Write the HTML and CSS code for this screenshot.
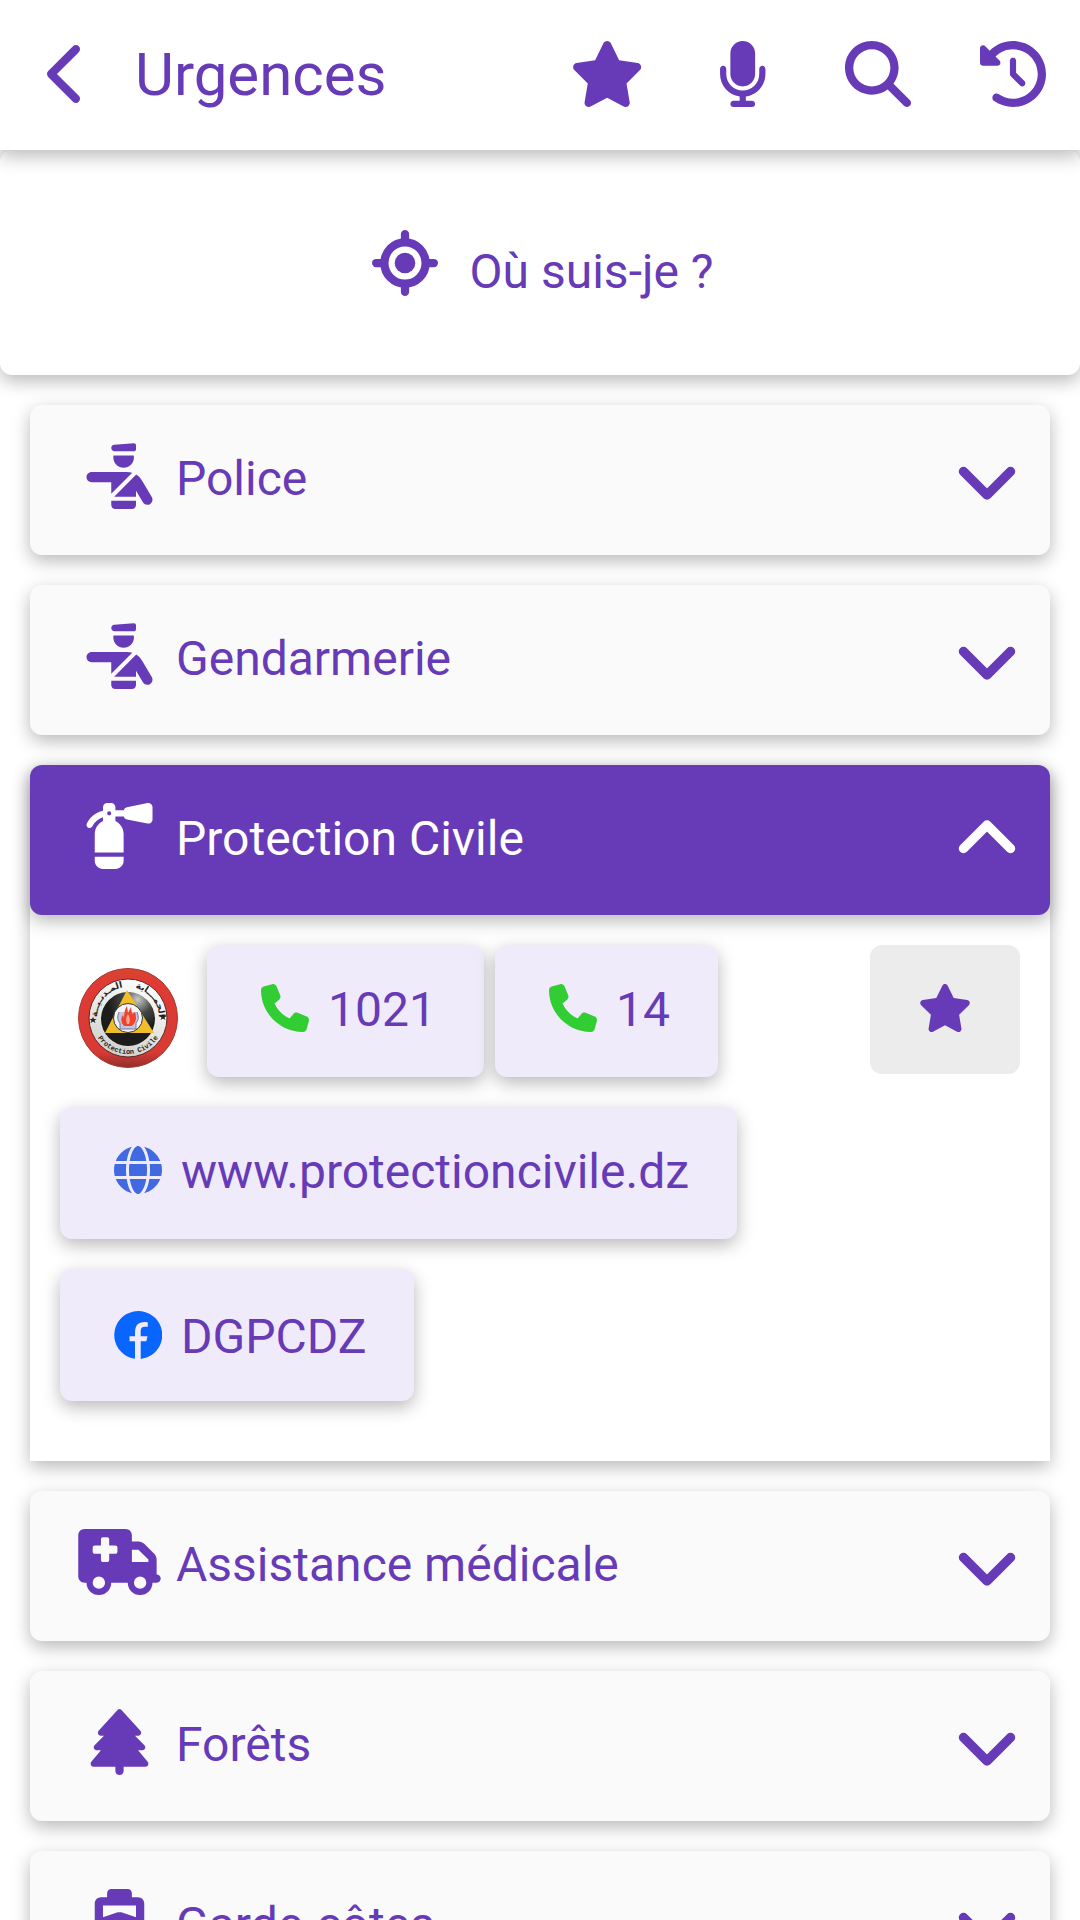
FILE: index.html
```html
<!DOCTYPE html>
<html lang="fr">
<head>
<meta charset="utf-8">
<meta name="viewport" content="width=device-width, initial-scale=1">
<title>Urgences</title>
<link rel="stylesheet" href="styles.css">
</head>
<body>
<svg class="sprite" aria-hidden="true">
  <symbol id="star" viewBox="0 0 576 512"><path d="M316.9 18C311.6 7 300.4 0 288.1 0s-23.4 7-28.8 18L195 150.3 51.4 171.5c-12 1.8-22 10.2-25.7 21.7s-.7 24.2 7.9 32.7L137.8 329 113.2 474.7c-2 12 3 24.2 12.9 31.3s23 8 33.8 2.3l128.3-68.5 128.3 68.5c10.8 5.7 23.9 4.9 33.8-2.3s14.9-19.3 12.9-31.3L438.5 329 542.7 225.9c8.6-8.5 11.7-21.2 7.9-32.7s-13.7-19.9-25.7-21.7L381.2 150.3 316.9 18z"/></symbol>
  <symbol id="down" viewBox="0 0 66 66"><path d="M9.500 24.500 33 48l23.500-23.500" fill="none" stroke="currentColor" stroke-width="9.500" stroke-linecap="round" stroke-linejoin="round"/></symbol>
  <symbol id="up" viewBox="0 0 66 66"><path d="M9.500 41.500 33 18l23.500 23.500" fill="none" stroke="currentColor" stroke-width="9.500" stroke-linecap="round" stroke-linejoin="round"/></symbol>
  <symbol id="officer" viewBox="0 0 576 512"><path d="M246.9 14.1C234 15.2 224 26 224 39c0 13.8 11.2 25 25 25H400c8.8 0 16-7.2 16-16V17.4C416 8 408 .7 398.7 1.4L246.9 14.1zM240 112c0 44.2 35.8 80 80 80s80-35.8 80-80c0-5.5-.6-10.8-1.6-16H241.6c-1 5.2-1.6 10.5-1.6 16zM72 224c-22.1 0-40 17.9-40 40s17.9 40 40 40H224v89.4L386.8 230.5c-13.3-4.3-27.3-6.5-41.6-6.5H240 72zm345.7 20.9L246.6 416H416V369.7l53.6 90.6c11.2 19 35.8 25.3 54.8 14.1s25.3-35.8 14.1-54.8L462.3 290.8c-11.2-18.9-26.6-34.5-44.6-45.9zM224 448v32c0 17.7 14.3 32 32 32H384c17.7 0 32-14.3 32-32V448H224z"/></symbol>
  <symbol id="phone" viewBox="0 0 512 512"><path d="M164.9 24.6c-7.7-18.6-28-28.5-47.4-23.2l-88 24C12.1 30.2 0 46 0 64C0 311.4 200.6 512 448 512c18 0 33.8-12.1 38.6-29.5l24-88c5.3-19.4-4.6-39.7-23.2-47.4l-96-40c-16.3-6.8-35.2-2.1-46.3 11.6L304.7 368C234.3 334.7 177.3 277.7 144 207.3L193.3 167c13.7-11.2 18.4-30 11.6-46.3l-40-96z"/></symbol>
</svg>

<header class="bar">
  <button class="bar-button" type="button" aria-label="Retour">
    <svg class="icon" viewBox="0 0 320 512"><path d="M9.4 233.4c-12.5 12.5-12.5 32.8 0 45.3l192 192c12.5 12.5 32.8 12.5 45.3 0s12.5-32.8 0-45.3L77.3 256 246.6 86.6c12.5-12.5 12.5-32.8 0-45.3s-32.8-12.5-45.3 0l-192 192z"/></svg>
  </button>
  <h1 class="title">Urgences</h1>
  <button class="bar-button" type="button" aria-label="Favoris"><svg class="icon" viewBox="0 0 576 512"><use href="#star"/></svg></button>
  <button class="bar-button" type="button" aria-label="Recherche vocale">
    <svg class="icon" viewBox="0 0 384 512"><path d="M192 0C139 0 96 43 96 96V256c0 53 43 96 96 96s96-43 96-96V96c0-53-43-96-96-96zM64 216c0-13.3-10.7-24-24-24s-24 10.7-24 24v40c0 89.1 66.2 162.7 152 174.4V464H120c-13.3 0-24 10.7-24 24s10.7 24 24 24h144c13.3 0 24-10.7 24-24s-10.7-24-24-24H216V430.4c85.8-11.7 152-85.3 152-174.4V216c0-13.3-10.7-24-24-24s-24 10.7-24 24v40c0 70.7-57.3 128-128 128s-128-57.3-128-128V216z"/></svg>
  </button>
  <button class="bar-button" type="button" aria-label="Rechercher">
    <svg class="icon" viewBox="0 0 512 512"><path d="M416 208c0 45.9-14.9 88.3-40 122.7L502.6 457.4c12.5 12.5 12.5 32.8 0 45.3s-32.8 12.5-45.3 0L330.7 376c-34.4 25.2-76.8 40-122.7 40C93.1 416 0 322.9 0 208S93.1 0 208 0S416 93.1 416 208zM208 352a144 144 0 1 0 0-288 144 144 0 1 0 0 288z"/></svg>
  </button>
  <button class="bar-button" type="button" aria-label="Historique">
    <svg class="icon" viewBox="0 0 512 512"><path d="M75 75L41 41C25.9 25.9 0 36.6 0 57.9V168c0 13.3 10.7 24 24 24H134.1c21.4 0 32.1-25.9 17-41l-30.8-30.8C155 85.5 203 64 256 64c106 0 192 86 192 192s-86 192-192 192c-40.8 0-78.6-12.7-109.7-34.4c-14.5-10.1-34.4-6.6-44.6 7.9s-6.6 34.4 7.9 44.6C151.2 495 201.7 512 256 512c141.4 0 256-114.6 256-256S397.4 0 256 0C185.3 0 121.3 28.7 75 75zm181 53c-13.3 0-24 10.7-24 24V256c0 6.4 2.5 12.5 7 17l72 72c9.4 9.4 24.6 9.4 33.9 0s9.4-24.6 0-33.9l-65-65V152c0-13.3-10.7-24-24-24z"/></svg>
  </button>
</header>

<main class="content">
  <button class="locate" type="button">
    <svg class="icon" viewBox="0 0 512 512" aria-hidden="true"><circle cx="256" cy="256" r="80"/><circle cx="256" cy="256" r="160" fill="none" stroke="currentColor" stroke-width="64"/><path d="M256 32v48M256 432v48M32 256h48M432 256h48" stroke="currentColor" stroke-width="64" stroke-linecap="round"/></svg>
    <span class="locate-label">Où suis-je ?</span>
  </button>

  <div class="list">
    <section class="card">
      <button class="row" type="button" aria-expanded="false">
        <svg class="row-icon" viewBox="0 0 576 512"><use href="#officer"/></svg>
        <span class="row-label">Police</span>
        <svg class="chevron" viewBox="0 0 66 66"><use href="#down"/></svg>
      </button>
    </section>
    <section class="card">
      <button class="row" type="button" aria-expanded="false">
        <svg class="row-icon" viewBox="0 0 576 512"><use href="#officer"/></svg>
        <span class="row-label">Gendarmerie</span>
        <svg class="chevron" viewBox="0 0 66 66"><use href="#down"/></svg>
      </button>
    </section>
    <section class="card card-open">
      <button class="row row-open" type="button" aria-expanded="true" aria-controls="civile">
        <svg class="row-icon" viewBox="0 0 512 512"><path d="M500.3 7.3C507.7 13.3 512 22.4 512 32v96c0 9.6-4.3 18.7-11.7 24.7s-17.2 8.5-26.6 6.6l-160-32C301.5 124.9 292 115.7 289 104H224v34.8c37.8 18 64 56.5 64 101.2V384H64V240c0-44.7 26.2-83.2 64-101.2V110c-36.2 11.1-66 36.9-82.3 70.5c-5.8 11.9-20.2 16.9-32.1 11.1S-3.3 171.4 2.5 159.5C26.7 109.8 72.7 72.6 128 60.4V32c0-17.7 14.3-32 32-32h32c17.7 0 32 14.3 32 32V56h65c3-11.7 12.5-20.9 24.7-23.4l160-32c9.4-1.9 19.1 .6 26.6 6.6zM288 416v32c0 35.3-28.7 64-64 64H128c-35.3 0-64-28.7-64-64V416H288zM176 96a16 16 0 1 0 0-32 16 16 0 1 0 0 32z"/></svg>
        <span class="row-label">Protection Civile</span>
        <svg class="chevron" viewBox="0 0 66 66"><use href="#up"/></svg>
      </button>
      <div class="panel" id="civile">
        <div class="contacts">
          <div class="contact-line">
            <svg class="emblem" viewBox="0 0 100 100" role="img" aria-label="Emblème de la Protection Civile">
              <defs>
                <linearGradient id="rim" x1="0" y1="0" x2="0" y2="1"><stop offset="0" stop-color="#d8452f"/><stop offset=".15" stop-color="#e03a34"/><stop offset=".85" stop-color="#d83a34"/><stop offset="1" stop-color="#8c2f2c"/></linearGradient>
                <linearGradient id="band" x1="0.7" y1="0" x2="0.3" y2="1"><stop offset="0" stop-color="#ffffff"/><stop offset="1" stop-color="#cfcfca"/></linearGradient>
                <radialGradient id="ball" cx=".68" cy=".14" r=".55"><stop offset="0" stop-color="#c9cbc8"/><stop offset=".5" stop-color="#444644"/><stop offset="1" stop-color="#1b1c1b"/></radialGradient>
                <path id="arc-top" d="M19 50a31 31 0 0 1 62 0"/>
                <path id="arc-bottom" d="M14 50a36 36 0 0 0 72 0"/>
              </defs>
              <circle cx="50" cy="50" r="49.500" fill="url(#rim)" stroke="#a83a34"/>
              <circle cx="50" cy="50" r="39" fill="url(#band)" stroke="#5a2a28"/>
              <circle cx="50" cy="51" r="27" fill="url(#ball)"/>
              <path d="M49 22 76 65H27z" fill="#f0bd2b"/>
              <circle cx="50" cy="50" r="14.500" fill="#f4f4f6" stroke="#33343a"/>
              <path d="M41 44q-3 7 1 11v6h16v-6q4-4 1-11M44 55h12" fill="#c3c5e2" stroke="#77799a"/>
              <path d="M46 58q-5-6-1-11l1 3q0-8 3-12l1 7 3-6 1 7 3-2q3 9-3 14z" fill="#f0432c"/>
              <path d="M49 56q-2-6 1-10 3 5 1 10z" fill="#f7a58c"/>
              <path d="m15 49 1 2h2.500l-2 1.500 1 2.500-2.500-1.500-2.500 1.500 1-2.500-2-1.500h2.500zM85 46l1 2h2.500l-2 1.500 1 2.500-2.500-1.500-2.500 1.500 1-2.500-2-1.500h2.500z" fill="#222"/>
              <text class="emblem-arabic"><textPath href="#arc-top" startOffset="50%">الحمـــاية &#160; &#160;المـدنـيــة</textPath></text>
              <text class="emblem-latin"><textPath href="#arc-bottom" startOffset="50%">Protection Civile</textPath></text>
            </svg>
            <div class="phones">
              <a class="chip" href="tel:1021"><svg class="chip-icon phone" viewBox="0 0 512 512"><use href="#phone"/></svg>1021</a>
              <a class="chip" href="tel:14"><svg class="chip-icon phone" viewBox="0 0 512 512"><use href="#phone"/></svg>14</a>
            </div>
          </div>
          <a class="chip" href="http://www.protectioncivile.dz"><svg class="chip-icon globe" viewBox="0 0 512 512"><path d="M352 256c0 22.2-1.2 43.6-3.3 64H163.3c-2.2-20.4-3.3-41.8-3.3-64s1.200-43.600 3.300-64H348.700c2.200 20.400 3.300 41.800 3.300 64zm28.800-64H503.900c5.300 20.500 8.100 41.900 8.100 64s-2.800 43.500-8.100 64H380.800c2.100-20.600 3.200-42 3.200-64s-1.100-43.400-3.200-64zm112.600-32H376.700c-10-63.900-29.800-117.400-55.300-151.600c78.300 20.700 142 77.500 171.900 151.600zm-149.100 0H167.700c6.100-36.400 15.500-68.600 27-94.700c10.500-23.600 22.200-40.700 33.500-51.500C239.400 3.200 248.700 0 256 0s16.600 3.200 27.800 13.800c11.300 10.800 23 27.900 33.500 51.500c11.600 26 20.900 58.200 27 94.700zm-209 0H18.600C48.600 85.900 112.200 29.100 190.600 8.400C165.100 42.600 145.300 96.100 135.300 160zM8.100 192H131.200c-2.100 20.600-3.200 42-3.200 64s1.100 43.400 3.200 64H8.100C2.800 299.500 0 278.100 0 256s2.800-43.500 8.100-64zM194.700 446.600c-11.600-26-20.900-58.200-27-94.600H344.300c-6.100 36.400-15.500 68.600-27 94.600c-10.500 23.600-22.200 40.700-33.500 51.500C272.600 508.800 263.300 512 256 512s-16.600-3.200-27.800-13.800c-11.300-10.800-23-27.900-33.500-51.500zM135.300 352c10 63.900 29.800 117.400 55.300 151.600C112.200 482.900 48.600 426.100 18.600 352H135.300zm358.100 0c-30 74.100-93.600 130.900-171.900 151.600c25.500-34.200 45.200-87.700 55.300-151.600H493.400z"/></svg>www.protectioncivile.dz</a>
          <a class="chip chip-social" href="https://www.facebook.com/DGPCDZ"><svg class="chip-icon facebook" viewBox="0 0 48 48"><path d="M21 47.800V30.200h-5.500v-5h5.500v-3.400C21 14.300 24.300 11 30.500 11c1.200 0 2.600.2 3.300.4v4.400c-.5-.1-1.400-.1-2.400-.1-3.400 0-4.700 1.300-4.700 4.600v4.900h6.800l-1.200 5h-5.600v17.700A24 24 0 1 0 21 47.800z"/></svg>DGPCDZ</a>
        </div>
        <button class="favorite" type="button" aria-label="Ajouter aux favoris"><svg class="favorite-icon" viewBox="0 0 576 512"><use href="#star"/></svg></button>
      </div>
    </section>
    <section class="card">
      <button class="row" type="button" aria-expanded="false">
        <svg class="row-icon" viewBox="0 0 640 512"><path d="M0 48C0 21.500 21.500 0 48 0H368c26.500 0 48 21.500 48 48V96h50.700c17 0 33.300 6.700 45.300 18.700L589.300 192c12 12 18.700 28.300 18.700 45.300V256v32 64c17.700 0 32 14.300 32 32s-14.300 32-32 32H576c0 53-43 96-96 96s-96-43-96-96H256c0 53-43 96-96 96s-96-43-96-96H48c-26.500 0-48-21.500-48-48V48zM416 256H544V237.300L466.700 160H416v96zM160 464a48 48 0 1 0 0-96 48 48 0 1 0 0 96zm368-48a48 48 0 1 0 -96 0 48 48 0 1 0 96 0zM176 80v48l-48 0c-8.800 0-16 7.200-16 16v32c0 8.800 7.200 16 16 16h48v48c0 8.800 7.200 16 16 16h32c8.800 0 16-7.200 16-16V192h48c8.800 0 16-7.200 16-16V144c0-8.800-7.200-16-16-16H240V80c0-8.800-7.200-16-16-16H192c-8.800 0-16 7.200-16 16z"/></svg>
        <span class="row-label">Assistance médicale</span>
        <svg class="chevron" viewBox="0 0 66 66"><use href="#down"/></svg>
      </button>
    </section>
    <section class="card">
      <button class="row" type="button" aria-expanded="false">
        <svg class="row-icon" viewBox="0 0 448 512"><path d="M210.600 5.900L62 169.400c-3.900 4.200-6 9.800-6 15.500C56 197.700 66.300 208 79.100 208H104L30.600 281.400c-4.200 4.200-6.600 10-6.600 16C24 309.900 34.100 320 46.600 320H80L5.400 409.500C1.900 413.700 0 419 0 424.500c0 13 10.500 23.500 23.500 23.500H192v32c0 17.700 14.300 32 32 32s32-14.300 32-32V448H424.500c13 0 23.500-10.500 23.500-23.500c0-5.500-1.900-10.800-5.400-15L368 320h33.400c12.500 0 22.600-10.100 22.600-22.600c0-6-2.400-11.800-6.600-16L344 208h24.900c12.700 0 23.100-10.300 23.100-23.100c0-5.700-2.100-11.300-6-15.500L237.400 5.900C234 2.100 229.100 0 224 0s-10 2.100-13.400 5.900z"/></svg>
        <span class="row-label">Forêts</span>
        <svg class="chevron" viewBox="0 0 66 66"><use href="#down"/></svg>
      </button>
    </section>
    <section class="card">
      <button class="row" type="button" aria-expanded="false">
        <svg class="row-icon" viewBox="0 0 576 512"><path d="M192 32c0-17.700 14.300-32 32-32H352c17.700 0 32 14.300 32 32V64h48c26.500 0 48 21.500 48 48V240l44.400 14.800c23.100 7.700 29.500 37.500 11.500 53.900l-101 92.600c-16.200 9.400-34.700 15.100-50.900 15.100c-19.600 0-40.800-7.700-59.200-20.300c-22.100-15.500-51.600-15.500-73.700 0c-17.100 11.800-38 20.300-59.200 20.300c-16.200 0-34.700-5.700-50.900-15.100l-101-92.600c-18-16.500-11.600-46.200 11.500-53.900L96 240V112c0-26.500 21.500-48 48-48h48V32zM160 218.700l107.800-35.900c13.100-4.400 27.300-4.400 40.500 0L416 218.700V128H160v90.700z"/><path d="M24 460q50-5 82-34 82 60 182 0 100 60 182 0 32 29 82 34" fill="none" stroke="currentColor" stroke-width="56" stroke-linecap="round"/></svg>
        <span class="row-label">Garde-côtes</span>
        <svg class="chevron" viewBox="0 0 66 66"><use href="#down"/></svg>
      </button>
    </section>
  </div>
</main>
</body>
</html>
```
FILE: styles.css
```css
:root {
  --primary: #673ab7;
  --surface: #fafafa;
  --chip: #f0ebfa;
  --radius: 12px;
  --shadow: 0 6px 18px rgba(0, 0, 0, .28);
}

* {
  box-sizing: border-box;
}

body {
  display: flex;
  flex-direction: column;
  height: 100vh;
  margin: 0;
  background: #fff;
  color: var(--primary);
  font-family: Roboto, "Liberation Sans", sans-serif;
  font-size: 48px;
  line-height: 60px;
}

button {
  padding: 0;
  border: 0;
  background: none;
  color: inherit;
  font: inherit;
  cursor: pointer;
}

svg {
  flex: none;
  fill: currentColor;
}

.sprite {
  display: none;
}

/* Top bar */
.bar {
  position: relative;
  z-index: 1;
  flex: none;
  display: flex;
  align-items: center;
  height: 150px;
  background: #fff;
  box-shadow: var(--shadow);
}

.bar-button {
  display: flex;
  justify-content: center;
  width: 135px;
  padding-bottom: 2px;
}

.icon {
  height: 66px;
}

.title {
  flex: 1;
  margin: 0;
  font-size: 60px;
  font-weight: 400;
}

/* Scrolling content */
.content {
  flex: 1;
  min-height: 0;
  overflow-y: auto;
  scrollbar-width: none;
}

.locate {
  display: flex;
  align-items: center;
  justify-content: center;
  gap: 32px;
  width: 100%;
  height: 225px;
  padding-left: 5px;
  border-radius: var(--radius);
  background: #fff;
  box-shadow: var(--shadow);
}

.locate-label {
  padding-top: 18px;
}

.list {
  display: flex;
  flex-direction: column;
  gap: 30px;
  padding: 30px;
}

.card {
  border-radius: var(--radius);
  background: var(--surface);
  box-shadow: var(--shadow);
}

.card-open {
  border-radius: var(--radius) var(--radius) 0 0;
  background: #fff;
}

.row {
  display: flex;
  align-items: center;
  gap: 15px;
  width: 100%;
  height: 150px;
  padding: 0 30px 0 48px;
  text-align: left;
}

.row-open {
  border-radius: var(--radius);
  background: var(--primary);
  color: #fff;
  box-shadow: var(--shadow);
}

.row-icon {
  width: 83px;
  height: 66px;
  margin-bottom: 8px;
}

.row-label {
  flex: 1;
  padding-bottom: 2px;
}

.chevron {
  width: 66px;
  height: 66px;
}

/* Expanded entry */
.panel {
  display: flex;
  align-items: flex-start;
  justify-content: space-between;
  gap: 30px;
  padding: 30px 30px 60px;
}

.contacts {
  display: flex;
  flex-direction: column;
  align-items: flex-start;
  gap: 30px;
}

.contact-line {
  display: flex;
  align-items: flex-end;
  gap: 29px;
  padding-left: 18px;
}

.emblem {
  width: 100px;
  height: 100px;
  margin-bottom: 9px;
}

.emblem-arabic {
  fill: #222;
  font: 700 9px "DejaVu Sans", sans-serif;
  text-anchor: middle;
}

.emblem-latin {
  fill: #222;
  font: 700 7px "Liberation Mono", monospace;
  text-anchor: middle;
}

.phones {
  display: flex;
  gap: 11px;
}

.chip {
  display: flex;
  align-items: center;
  gap: 19px;
  height: 132px;
  padding: 0 48px 2px 54px;
  border-radius: var(--radius);
  background: var(--chip);
  color: inherit;
  text-decoration: none;
  box-shadow: var(--shadow);
}

.chip-social {
  padding-top: 6px;
}

.chip-icon {
  width: 48px;
  height: 48px;
  margin-bottom: 4px;
}

.phone {
  color: #32cd32;
}

.globe {
  color: #4169e1;
}

.facebook {
  color: #0866ff;
}

.favorite {
  display: flex;
  align-items: center;
  justify-content: center;
  width: 150px;
  height: 129px;
  padding-bottom: 4px;
  border-radius: var(--radius);
  background: #ececec;
}

.favorite-icon {
  height: 48px;
}
```
